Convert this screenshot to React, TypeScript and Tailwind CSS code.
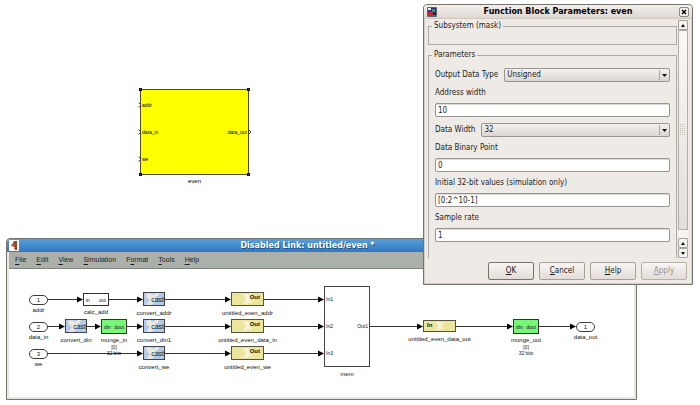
import type { ReactNode } from "react";

const UI_FONT = "font-['DejaVu_Sans_Condensed','DejaVu_Sans',sans-serif]";
const TITLE_FONT = "font-['DejaVu_Sans',sans-serif]";
const MODEL_FONT = "font-['Liberation_Sans',Arial,sans-serif]";

/* ---------- model canvas ---------- */

function Node({ at, label, notes, gap = "mt-[3px]", children }: {
  at: string;
  label: string;
  notes?: string[];
  gap?: string;
  children: ReactNode;
}) {
  return (
    <div className={`absolute flex flex-col items-center ${at}`}>
      {children}
      <div className={`whitespace-nowrap text-[6px] leading-[8px] ${gap}`}>{label}</div>
      {notes?.map((n) => (
        <div key={n} className="whitespace-nowrap text-[5px] leading-[6px]">{n}</div>
      ))}
    </div>
  );
}

function Port({ at, n, label }: { at: string; n: number; label: string }) {
  return (
    <Node at={`w-[19px] ${at}`} label={label} gap="mt-px">
      <div className="flex h-[10px] w-full items-center justify-center rounded-full border border-[#3a3a3a] bg-white text-[6px] leading-[8px]">
        {n}
      </div>
    </Node>
  );
}

function Cast({ at, label }: { at: string; label: string }) {
  return (
    <Node at={`w-[22px] ${at}`} label={label}>
      <div className="relative flex h-[14px] w-full items-center justify-end border border-[#3c4250] bg-[#b5c9e8]">
        <svg className="absolute inset-0 h-full w-full" viewBox="0 0 20 12" aria-hidden="true">
          <path d="M2 1l4-1 3 2 3-2h3l-1 3-3 1 2 3-3 1-1 3-2 1H2l4-5-3-2z" fill="#ece9dc" />
        </svg>
        <span className="relative pt-px text-[7px] leading-[8px] text-[#101828]">cast</span>
      </div>
    </Node>
  );
}

function Gateway({ at, label, text, side, h = "h-[14px]" }: {
  at: string;
  label: string;
  text: string;
  side: string;
  h?: string;
}) {
  return (
    <Node at={`w-[33px] ${at}`} label={label}>
      <div className={`relative flex w-full items-start border border-[#55533a] bg-[#ebe69c] px-[3px] ${h} ${side}`}>
        <svg className="absolute inset-0 h-full w-full" viewBox="0 0 31 12" aria-hidden="true">
          <path d="M11 1h4l2 2 2-2 1 1-3 4 3 3-1 1.500-2.500-1.500-2.500 2h-3l3-5-1-2z" fill="#f7f4dc" />
        </svg>
        <span className="relative text-[6px] font-bold leading-[8px]">{text}</span>
      </div>
    </Node>
  );
}

function Pair({ at, label, left, right, tone, notes }: {
  at: string;
  label: string;
  left: string;
  right: string;
  tone: string;
  notes?: string[];
}) {
  return (
    <Node at={`w-[26px] ${at}`} label={label} notes={notes} gap="mt-[2px]">
      <div className={`flex w-full items-center justify-between border border-[#333] px-[2px] text-[5px] leading-[6px] ${tone}`}>
        <span>{left}</span>
        <span>{right}</span>
      </div>
    </Node>
  );
}

const wires: [number, number, number][] = [
  [39, 74, 30], [100, 134, 30], [156, 222, 30], [255, 315, 30],
  [39, 56, 57], [78, 92, 57], [118, 134, 57], [156, 222, 57], [255, 315, 57],
  [39, 134, 84], [156, 222, 84], [255, 315, 84],
  [361, 414, 57], [447, 504, 57], [530, 567, 57],
];

function Wires() {
  return (
    <svg className="absolute left-0 top-0" width="620" height="120" aria-hidden="true">
      {wires.map(([x1, x2, y]) => (
        <g key={`${x1}-${y}`}>
          <line x1={x1} x2={x2 - 4} y1={y + 0.5} y2={y + 0.5} stroke="#333" />
          <path d={`M${x2 - 6} ${y - 2.5}L${x2} ${y + 0.5}L${x2 - 6} ${y + 3.5}Z`} fill="#000" />
        </g>
      ))}
    </svg>
  );
}

function ModelCanvas() {
  return (
    <div className={`relative min-h-0 flex-1 bg-white text-[#111] ${MODEL_FONT}`}>
      <Wires />
      <Port at="left-[20px] top-[26px]" n={1} label="addr" />
      <Port at="left-[20px] top-[53px]" n={2} label="data_in" />
      <Port at="left-[20px] top-[80px]" n={3} label="we" />
      <Pair at="left-[74px] top-[24px]" label="calc_add" left="in" right="out" tone="h-[13px] bg-white" />
      <Cast at="left-[134px] top-[23px]" label="convert_addr" />
      <Cast at="left-[56px] top-[50px]" label="convert_din" />
      <Pair at="left-[92px] top-[50px]" label="munge_in" left="din" right="dout" tone="h-[15px] bg-[#77f777]" notes={["[0]", "32 bits"]} />
      <Cast at="left-[134px] top-[50px]" label="convert_din1" />
      <Cast at="left-[134px] top-[77px]" label="convert_we" />
      <Gateway at="left-[222px] top-[23px]" label="untitled_even_addr" text="Out" side="justify-end" />
      <Gateway at="left-[222px] top-[50px]" label="untitled_even_data_in" text="Out" side="justify-end" />
      <Gateway at="left-[222px] top-[77px]" label="untitled_even_we" text="Out" side="justify-end" />
      <Node at="left-[315px] top-[17px] w-[46px]" label="mem">
        <div className="flex h-[81px] w-full items-center justify-between border border-[#444] bg-white px-px text-[5px] leading-[7px]">
          <div className="flex flex-col gap-[20px]">
            <span>In1</span>
            <span>In2</span>
            <span>In3</span>
          </div>
          <span>Out1</span>
        </div>
      </Node>
      <Gateway at="left-[414px] top-[51px]" label="untitled_even_data_out" text="In" side="justify-start" h="h-[12px]" />
      <Pair at="left-[504px] top-[50px]" label="munge_out" left="din" right="dout" tone="h-[15px] bg-[#77f777]" notes={["[0]", "32 bits"]} />
      <Port at="left-[567px] top-[53px]" n={1} label="data_out" />
    </div>
  );
}

function ModelWindow() {
  const menus = ["File", "Edit", "View", "Simulation", "Format", "Tools", "Help"];
  const keys = [0, 0, 0, 0, 1, 0, 0];
  return (
    <section className="absolute bottom-[5px] left-[6px] right-[63px] top-[238px] flex flex-col rounded-t-[4px] border border-[#77736c] bg-[#eae7e1]">
      <header className="flex h-[13px] shrink-0 items-center rounded-t-[3px] bg-linear-to-b from-[#5a9fdc] to-[#3079c0] pl-[2px] pr-[40px]">
        <svg className="shrink-0" width="10" height="11" viewBox="0 0 10 11" aria-hidden="true">
          <rect width="10" height="11" fill="#fff" />
          <path d="M5 1h3v9H6V7L2 6l2-3z" fill="#8b4a33" />
          <path d="M2 5l4-1-1 3z" fill="#e2631f" />
          <path d="M5 8l1.500-1 1 1.500-1 1.500z" fill="#b3262a" />
        </svg>
        <h1 className={`flex-1 text-center text-[8px] font-bold leading-[12px] text-white [text-shadow:1px_1px_0_#1d4f86] ${TITLE_FONT}`}>
          Disabled Link: untitled/even *
        </h1>
      </header>
      <nav className={`mx-[2px] flex h-[17px] shrink-0 items-center gap-[10px] border-b border-[#7f857e] bg-[#abb1aa] px-[6px] text-[7px] leading-[10px] text-[#1c1c1c] ${MODEL_FONT}`}>
        {menus.map((m, i) => (
          <button key={m} type="button">
            {m.slice(0, keys[i])}
            <span className="underline underline-offset-2">{m[keys[i]]}</span>
            {m.slice(keys[i] + 1)}
          </button>
        ))}
      </nav>
      <div className="mx-[2px] mb-[2px] flex min-h-0 flex-1 flex-col">
        <ModelCanvas />
      </div>
    </section>
  );
}

/* ---------- selected subsystem block ---------- */

function Chevron({ at }: { at: string }) {
  return (
    <svg className={`absolute ${at}`} width="4" height="6" viewBox="0 0 4 6" aria-hidden="true">
      <path d="M0.500 0.500L3 3L0.500 5.500" fill="none" stroke="#333" strokeWidth="0.900" />
    </svg>
  );
}

function SubsystemBlock() {
  const corners = ["-left-[2px] -top-[2px]", "-right-[2px] -top-[2px]", "-left-[2px] -bottom-[2px]", "-right-[2px] -bottom-[2px]"];
  return (
    <div className={`absolute left-[140px] top-[89px] flex w-[109px] flex-col items-center text-black ${MODEL_FONT}`}>
      <div className="relative flex h-[86px] w-full items-center justify-between border border-[#4d4d20] bg-[#ffff00] px-px text-[5px] leading-[7px]">
        <div className="flex flex-col gap-[20px]">
          <span>addr</span>
          <span>data_in</span>
          <span>we</span>
        </div>
        <span>data_out</span>
        <Chevron at="-left-[3px] top-[12px]" />
        <Chevron at="-left-[3px] top-[39px]" />
        <Chevron at="-left-[3px] top-[66px]" />
        <Chevron at="-right-[4px] top-[39px]" />
        {corners.map((c) => (
          <i key={c} className={`absolute size-[3px] border border-black bg-[#3838d8] ${c}`} />
        ))}
      </div>
      <div className="mt-[2px] text-[6px] leading-[8px]">even</div>
    </div>
  );
}

/* ---------- parameter dialog ---------- */

function TextField({ id, label, value }: { id: string; label: string; value: string }) {
  return (
    <div className="flex flex-col">
      <label htmlFor={id} className="flex h-[21px] items-center pt-px">{label}</label>
      <input
        id={id}
        type="text"
        defaultValue={value}
        className="h-[14px] w-full rounded-[2px] border border-[#989590] bg-white px-[2px] shadow-[inset_0_1px_0_#dcdad6]"
      />
    </div>
  );
}

function SelectField({ id, label, value }: { id: string; label: string; value: string }) {
  return (
    <div className="flex items-center gap-[6px]">
      <label htmlFor={id} className="whitespace-nowrap">{label}</label>
      <div className="relative flex-1">
        <select
          id={id}
          defaultValue={value}
          className="block h-[14px] w-full appearance-none rounded-[2px] border border-[#989590] bg-linear-to-b from-[#f4f2ef] to-[#dcd6d1] px-[2px]"
        >
          <option>{value}</option>
        </select>
        <div className="pointer-events-none absolute inset-y-[2px] right-px flex w-[10px] items-center justify-center border-l border-[#aaa6a0]">
          <svg width="5" height="3" viewBox="0 0 5 3" aria-hidden="true">
            <path d="M0 0h5L2.500 3z" fill="#111" />
          </svg>
        </div>
      </div>
    </div>
  );
}

function ScrollButton({ dir }: { dir: "up" | "down" }) {
  return (
    <button
      type="button"
      aria-label={`Scroll ${dir}`}
      className="flex h-[10px] w-full shrink-0 items-center justify-center rounded-[1px] border border-[#a5a19b] bg-[#f5f3f0]"
    >
      <svg width="4" height="3" viewBox="0 0 4 3" aria-hidden="true">
        <path d={dir === "up" ? "M0 3h4L2 0z" : "M0 0h4L2 3z"} fill="#111" />
      </svg>
    </button>
  );
}

function ParametersDialog() {
  const buttons = [
    { label: "OK", look: "border-[#77736d] text-[#1a1a1a]" },
    { label: "Cancel", look: "border-[#a5a19b] text-[#1a1a1a]" },
    { label: "Help", look: "border-[#a5a19b] text-[#1a1a1a]" },
    { label: "Apply", look: "border-[#b5b1ab] text-[#96928d]" },
  ];
  return (
    <section
      role="dialog"
      aria-labelledby="dialog-title"
      className={`absolute right-[7px] top-[4px] w-[270px] rounded-t-[4px] border border-[#77736c] bg-[#eeebe7] text-[8px] leading-[10px] text-[#222] shadow-[inset_1px_0_0_#d4cfc9,inset_-1px_0_0_#d4cfc9,inset_0_-1px_0_#d4cfc9] ${UI_FONT}`}
    >
      <header className="flex h-[14px] items-center justify-between rounded-t-[3px] border-b border-[#cfc8c1] bg-linear-to-b from-[#f3efeb] to-[#dfd8d1] px-[3px]">
        <svg width="10" height="10" viewBox="0 0 10 10" aria-hidden="true">
          <rect width="10" height="10" rx="1" fill="#5d6178" />
          <rect x="1" y="1" width="8" height="6" fill="#283078" />
          <path d="M1 1h3v2H1z" fill="#e9e9f2" />
          <path d="M5 2h3v3H5z" fill="#2d9a72" />
          <circle cx="3.500" cy="6.500" r="2.500" fill="#d3202a" />
          <path d="M6 6h3v2H6z" fill="#1d1d2b" />
        </svg>
        <h2 id="dialog-title" className={`font-bold text-black ${TITLE_FONT}`}>Function Block Parameters: even</h2>
        <button type="button" aria-label="Close" className="flex size-[10px] items-center justify-center rounded-[2px] border border-[#8e8982] bg-[#f0ece8]">
          <svg width="6" height="6" viewBox="0 0 6 6" aria-hidden="true">
            <path d="M1 1l4 4M5 1L1 5" stroke="#000" strokeWidth="1.400" />
          </svg>
        </button>
      </header>

      <div className="flex gap-px px-[4px] pt-px">
        <div className="min-w-0 flex-1 pt-px">
          <fieldset className="h-[24px] border border-[#aeaba6] px-[3px]">
            <legend className="px-[2px]">Subsystem (mask)</legend>
          </fieldset>
          <fieldset className="mt-[5px] border border-b-0 border-[#aeaba6] px-[6px] pb-[16px]">
            <legend className="-ml-[3px] px-[2px]">Parameters</legend>
            <div className="flex flex-col pt-[8px]">
              <SelectField id="type" label="Output Data Type" value="Unsigned" />
              <TextField id="addr-width" label="Address width" value="10" />
              <div className="pt-[6px]">
                <SelectField id="data-width" label="Data Width" value="32" />
              </div>
              <TextField id="binary-point" label="Data Binary Point" value="0" />
              <TextField id="initial" label="Initial 32-bit values (simulation only)" value="[0:2^10-1]" />
              <TextField id="rate" label="Sample rate" value="1" />
            </div>
          </fieldset>
        </div>
        <div className="flex w-[10px] flex-col bg-[#f6f3f0]">
          <ScrollButton dir="up" />
          <div className="mb-[8px] flex flex-1 items-center justify-center border border-[#b3aea8] bg-linear-to-b from-[#fbf8f6] to-[#e2dedb]">
            <svg width="6" height="12" viewBox="0 0 6 12" aria-hidden="true">
              {[0, 2, 4, 6, 8, 10].map((y) => (
                <path key={y} d={`M0 ${y}h1v1h-1zM2 ${y}h1v1h-1zM4 ${y}h1v1h-1z`} fill="#c3bdb8" />
              ))}
            </svg>
          </div>
          <ScrollButton dir="up" />
          <ScrollButton dir="down" />
        </div>
      </div>

      <footer className="flex justify-end gap-[5px] px-[5px] pb-[4px] pt-[4px]">
        {buttons.map((b) => (
          <button
            key={b.label}
            type="button"
            disabled={b.label === "Apply"}
            className={`h-[18px] w-[46px] rounded-[2px] border bg-linear-to-b from-[#f7f5f3] to-[#e3dcd7] ${b.look}`}
          >
            <span className="underline underline-offset-1">{b.label[0]}</span>
            {b.label.slice(1)}
          </button>
        ))}
      </footer>
    </section>
  );
}

export default function App() {
  return (
    <main className="relative h-screen overflow-hidden bg-white">
      <SubsystemBlock />
      <ModelWindow />
      <ParametersDialog />
    </main>
  );
}
